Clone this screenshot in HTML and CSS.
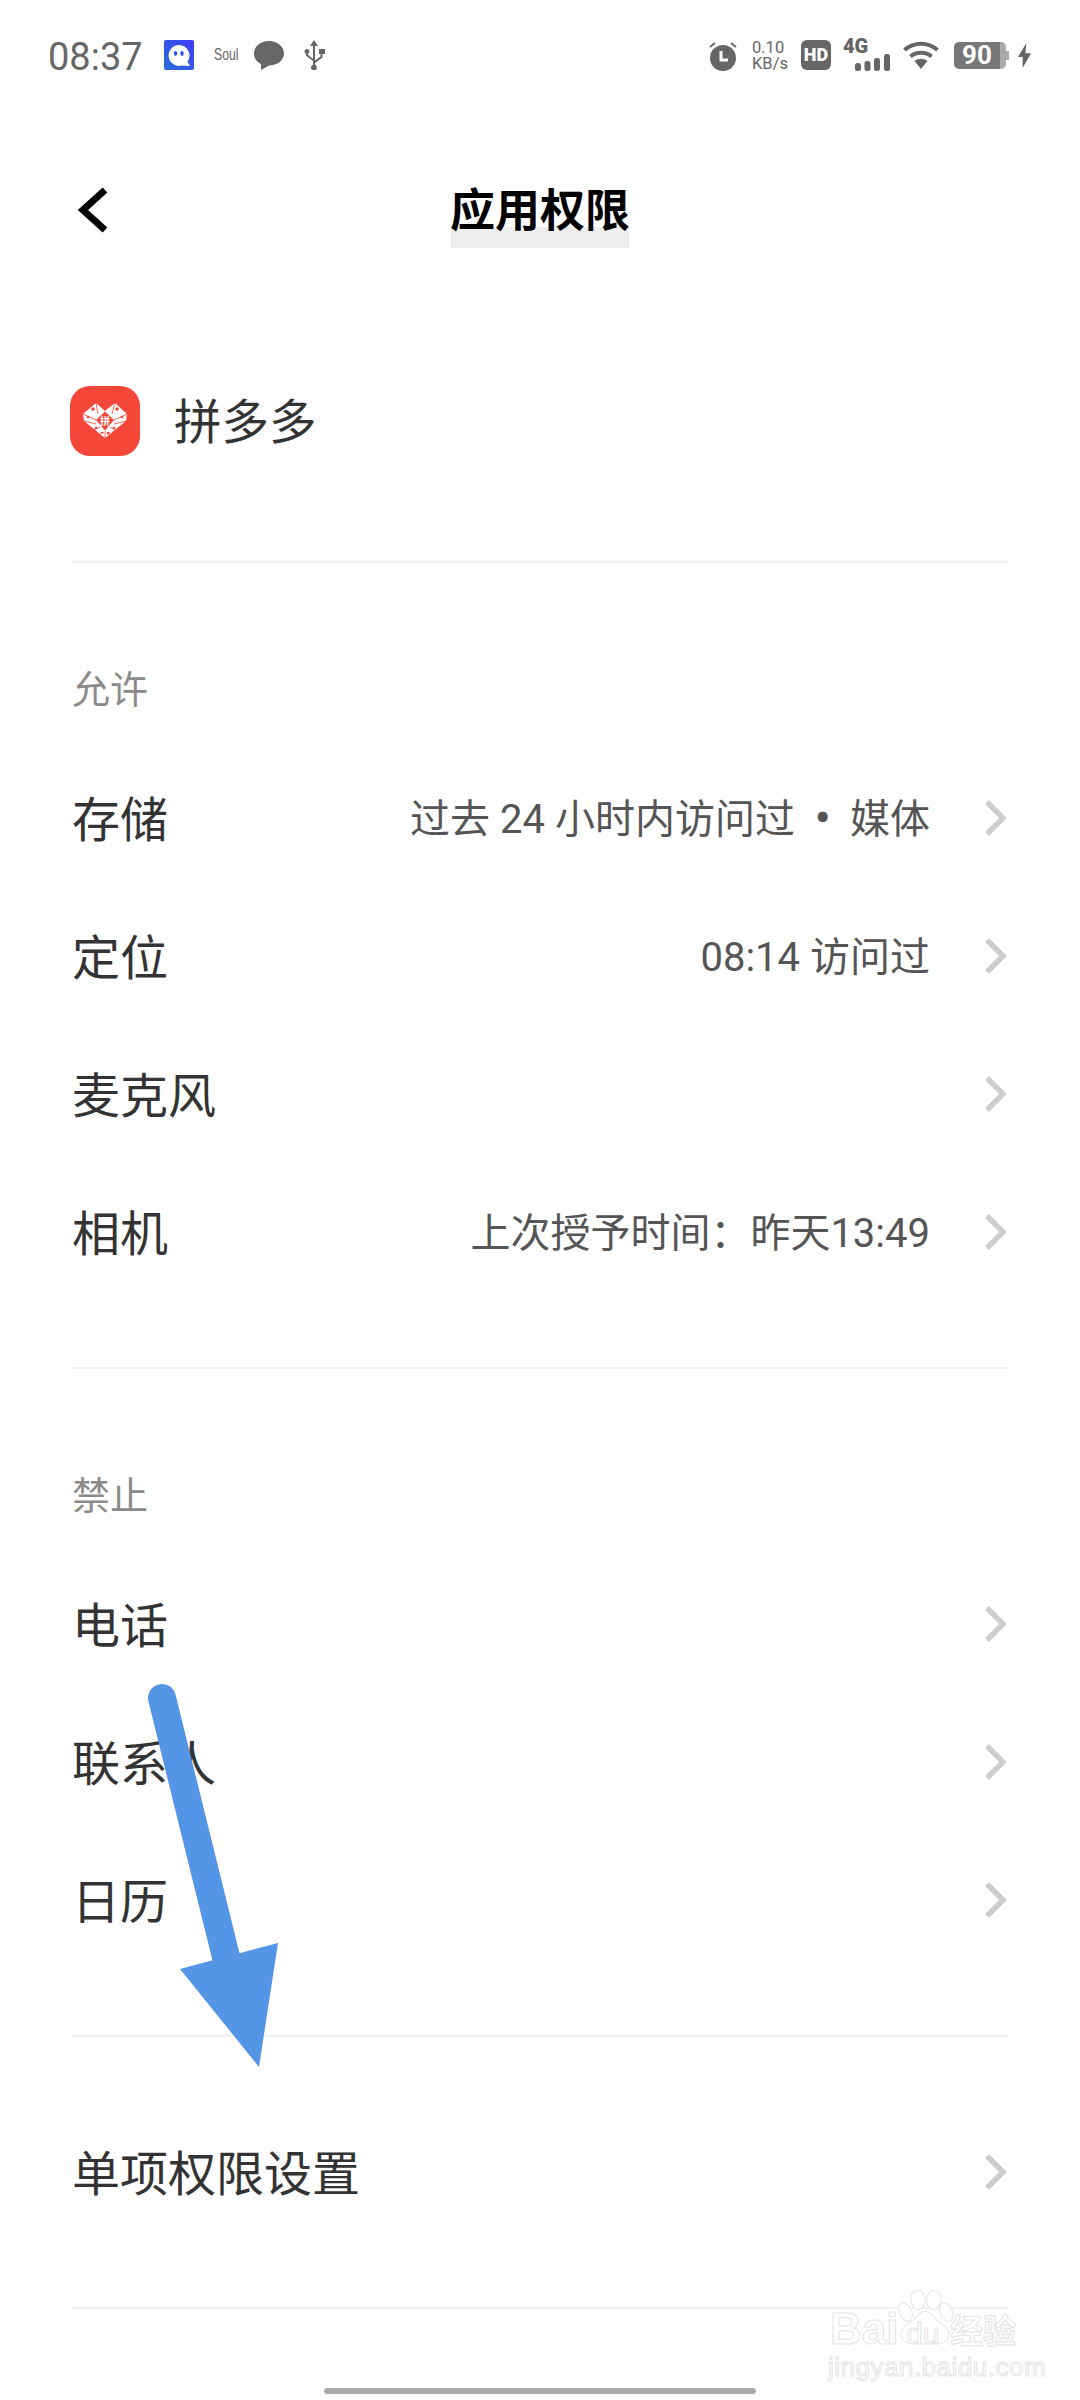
FILE: index.html
```html
<!DOCTYPE html>
<html lang="zh-CN">
<head>
<meta charset="utf-8">
<title>应用权限</title>
<link rel="stylesheet" href="styles.css">
</head>
<body>
<div class="phone">
  <div class="status">
    <div class="status-left">
      <span class="time">08:37</span>
      <svg class="ic-q" viewBox="0 0 30 30"><defs><linearGradient id="qg" x1="0" y1="1" x2="1" y2="0"><stop offset="0" stop-color="#2a6fd8"/><stop offset="1" stop-color="#3f3cf5"/></linearGradient></defs><rect width="30" height="30" rx="2" fill="url(#qg)"/><path d="M15 5a10.500 10.500 0 1 0 3 20.600L26 26l-2.500-4.500A10.500 10.500 0 0 0 15 5z" fill="#fff"/><ellipse cx="11.500" cy="13.500" rx="1.700" ry="2.400" fill="#3553e8"/><ellipse cx="18" cy="13.500" rx="1.700" ry="2.400" fill="#3553e8"/></svg>
      <span class="soul">Soul</span>
      <svg class="ic-msg" viewBox="0 0 30 29"><path d="M15 0C6.700 0 0 5 0 12.500c0 5 3 8.500 7 10.500l0 6 8-4.500c8.300 0 15-5 15-12S23.300 0 15 0z" fill="#666"/></svg>
      <svg class="ic-usb" viewBox="0 0 22 30"><path d="M11 0l4 6h-3v14.500l5.500-4V14H16V9h6v5h-2.500v3.500L12 23v1.700a3 3 0 1 1-2 0V21L3 15.700v-1.900a2.500 2.500 0 1 1 2 0v.9l5 4V6H7z" fill="#666"/></svg>
    </div>
    <div class="status-right">
      <svg class="ic-alarm" viewBox="0 0 28 30"><circle cx="14" cy="17" r="13" fill="#666"/><path d="M1 6l5-4M27 6l-5-4" stroke="#666" stroke-width="2"/><path d="M12 10v9h7" stroke="#fff" stroke-width="3" fill="none"/></svg>
      <div class="speed"><span>0.10</span><span>KB/s</span></div>
      <div class="hd">HD</div>
      <div class="signal">
        <span class="net">4G</span>
        <svg class="ic-bars" viewBox="0 0 35 17"><g fill="#666"><rect x="0" y="9" width="6" height="8" rx="2.500"/><rect x="9.500" y="7" width="6" height="10" rx="2.500"/><rect x="19" y="4" width="6" height="13" rx="2.500"/><rect x="29" y="0" width="6" height="17" rx="2.500"/></g></svg>
      </div>
      <svg class="ic-wifi" viewBox="0 0 36 28"><g fill="none" stroke="#666" stroke-width="4"><path d="M1.500 9c9.500-8.500 23.500-8.500 33 0"/><path d="M7.500 15.500c6-5 15-5 21 0"/></g><path d="M11.500 20c4-3 9-3 13 0L18 28z" fill="#666"/></svg>
      <div class="battery"><span class="batt-num">90</span></div>
      <svg class="ic-bolt" viewBox="0 0 14 27"><path d="M9 0L0 15h5L5 27l9-16H8z" fill="#666"/></svg>
    </div>
  </div>

  <header class="header">
    <svg class="back" viewBox="0 0 32 48"><path d="M28 4L6 24l22 20" fill="none" stroke="#000" stroke-width="7"/></svg>
    <h1 class="title">应用权限</h1>
  </header>

  <div class="app">
    <div class="app-icon">
      <svg class="heart" viewBox="0 0 44 35"><path d="M13 0l9 8 10-8 12 11-1 7-21 17L1 18 0 11z" fill="#fff"/><path d="M13 0l2 11M32 0l-3 11M0 11l13 6M44 11l-13 6M1 18l12 3M43 18l-12 3M11 27l6-3M33 27l-6-3M22 28v7" stroke="#f44336" stroke-width=".8"/><path d="M13 17l9-8.500 9 8.500-9 10.500z" fill="#f44336"/><g fill="#f44336"><circle cx="10" cy="6" r="1.800"/><circle cx="34" cy="6" r="1.800"/><circle cx="5" cy="14" r="1.300"/><circle cx="39" cy="14" r="1.300"/><circle cx="13" cy="25" r="1.300"/><circle cx="31" cy="25" r="1.300"/><rect x="17.500" y="29" width="3" height="1.500"/><rect x="24" y="29" width="2.500" height="2.500"/></g><text class="heart-text" x="22" y="21.500" text-anchor="middle">拼</text></svg>
    </div>
    <span class="app-name">拼多多</span>
  </div>

  <section class="section">
    <div class="label">允许</div>
    <div class="row"><span class="row-name">存储</span><span class="row-val">过去 24 小时内访问过<b class="dot">•</b>媒体</span><svg class="chev" viewBox="0 0 24 38"><path d="M3 3l16 16L3 35" fill="none" stroke="#cdcdcd" stroke-width="5.500"/></svg></div>
    <div class="row"><span class="row-name">定位</span><span class="row-val">08:14 访问过</span><svg class="chev" viewBox="0 0 24 38"><path d="M3 3l16 16L3 35" fill="none" stroke="#cdcdcd" stroke-width="5.500"/></svg></div>
    <div class="row"><span class="row-name">麦克风</span><span class="row-val"></span><svg class="chev" viewBox="0 0 24 38"><path d="M3 3l16 16L3 35" fill="none" stroke="#cdcdcd" stroke-width="5.500"/></svg></div>
    <div class="row"><span class="row-name">相机</span><span class="row-val">上次授予时间&#xFF1A;昨天13:49</span><svg class="chev" viewBox="0 0 24 38"><path d="M3 3l16 16L3 35" fill="none" stroke="#cdcdcd" stroke-width="5.500"/></svg></div>
  </section>

  <section class="section">
    <div class="label">禁止</div>
    <div class="row"><span class="row-name">电话</span><span class="row-val"></span><svg class="chev" viewBox="0 0 24 38"><path d="M3 3l16 16L3 35" fill="none" stroke="#cdcdcd" stroke-width="5.500"/></svg></div>
    <div class="row"><span class="row-name">联系人</span><span class="row-val"></span><svg class="chev" viewBox="0 0 24 38"><path d="M3 3l16 16L3 35" fill="none" stroke="#cdcdcd" stroke-width="5.500"/></svg></div>
    <div class="row"><span class="row-name">日历</span><span class="row-val"></span><svg class="chev" viewBox="0 0 24 38"><path d="M3 3l16 16L3 35" fill="none" stroke="#cdcdcd" stroke-width="5.500"/></svg></div>
  </section>

  <section class="section section-single">
    <div class="row"><span class="row-name">单项权限设置</span><span class="row-val"></span><svg class="chev" viewBox="0 0 24 38"><path d="M3 3l16 16L3 35" fill="none" stroke="#cdcdcd" stroke-width="5.500"/></svg></div>
  </section>
  <div class="rule"></div>

  <svg class="arrow" viewBox="0 0 150 400"><path d="M22 18L88 285" fill="none" stroke="#5595e6" stroke-width="28" stroke-linecap="round"/><path d="M40 289L138 263L119 387z" fill="#5595e6"/></svg>

  <div class="watermark">
    <svg class="wm-paw" viewBox="0 0 60 70"><g fill="#fff" stroke="#e6e6e6" stroke-width="1.200"><ellipse cx="8" cy="25" rx="7" ry="11" transform="rotate(-25 8 25)"/><ellipse cx="22" cy="11" rx="8" ry="11" transform="rotate(-5 22 11)"/><ellipse cx="40" cy="11" rx="8" ry="11" transform="rotate(8 40 11)"/><ellipse cx="54" cy="25" rx="7" ry="11" transform="rotate(-25 54 25)"/><path d="M30 24c-8 0-10 9-17 13-9 5-12 12-9 18 3 5 9 6 26 6s23-1 26-6c3-6 0-13-9-18-7-4-9-13-17-13z"/></g></svg>
    <span class="wm-bai">Bai</span>
    <span class="wm-du">du</span>
    <span class="wm-cn">经验</span>
    <span class="wm-url">jingyan.baidu.com</span>
  </div>

  <div class="home-bar"></div>
</div>
</body>
</html>
```
FILE: styles.css
```css
* { box-sizing: border-box; }
html, body { margin: 0; padding: 0; background: #fff; }
.phone {
  position: relative;
  isolation: isolate;
  width: 1080px;
  height: 2400px;
  overflow: hidden;
  background: #fff;
  font-family: "Noto Sans CJK SC", "Noto Sans", sans-serif;
  color: #333;
}
.status {
  height: 108px;
  display: flex;
  justify-content: space-between;
  align-items: flex-start;
  padding: 38px 49px 0 48px;
  color: #666;
}
.status-left, .status-right { display: flex; align-items: center; height: 34px; }
.time { font: 400 38px/34px Roboto, sans-serif; color: #666; width: 116px; margin-top: 4px; }
.ic-q { width: 30px; height: 30px; margin-right: 20px; }
.soul { font: 400 17px/34px "Liberation Sans", sans-serif; transform: scaleX(.72); transform-origin: left center; width: 21px; margin-right: 19px; color: #666; }
.ic-msg { width: 30px; height: 29px; margin-right: 19px; }
.ic-usb { width: 22px; height: 30px; }
.ic-alarm { width: 28px; height: 30px; margin-right: 15px; margin-top: 1px; }
.speed { display: flex; flex-direction: column; align-items: flex-start; font: 400 16.500px/16px Roboto, sans-serif; color: #666; width: 36px; margin-right: 13px; margin-top: 1px; }
.hd {
  width: 30px; height: 30px;
  border-radius: 6px;
  background: #666;
  color: #fff;
  text-align: center;
  font: 900 18px/30px Roboto, sans-serif;
  margin-right: 12px;
}
.signal { position: relative; width: 47px; height: 34px; margin-right: 13px; }
.net { position: absolute; left: 0; top: -2px; font: 900 20px/20px Roboto, sans-serif; color: #666; }
.ic-bars { position: absolute; right: 0; bottom: 1px; width: 35px; height: 17px; }
.ic-wifi { width: 36px; height: 28px; margin-right: 15px; }
.battery {
  position: relative;
  width: 52px;
  height: 27px;
  border-radius: 5px;
  background: linear-gradient(90deg, #777 0 88%, #aaa 88%);
  margin-right: 12px;
  text-align: center;
}
.battery::after { content: ""; position: absolute; right: -3px; top: 9px; width: 3px; height: 9px; background: #aaa; }
.batt-num { color: #fff; font: 700 26px/27px Roboto, sans-serif; margin-left: -6px; }
.ic-bolt { width: 13px; height: 27px; }

.header {
  position: relative;
  height: 208px;
  display: flex;
  align-items: center;
  justify-content: center;
}
.back { position: absolute; left: 77px; top: 78px; width: 32px; height: 48px; }
.title {
  position: relative;
  margin: -8px 0 0 0;
  font-size: 45px;
  line-height: 60px;
  font-weight: 700;
  color: #000;
}
.title::before {
  content: "";
  position: absolute;
  left: 1px; right: 1px;
  top: 49px;
  height: 21px;
  background: #eee;
  z-index: -1;
}
.app {
  height: 245px;
  display: flex;
  align-items: center;
  padding: 0 0 35px 70px;
}
.app-icon {
  width: 70px; height: 70px;
  border-radius: 20px;
  background: #f4473a;
  display: flex; align-items: center; justify-content: center;
  margin-right: 34px;
}
.heart { width: 44px; height: 35px; margin-top: -2px; }
.heart-text { font: 700 10px "Noto Sans CJK SC", sans-serif; fill: #fff; }
.app-name { font-size: 47.500px; line-height: 60px; color: #333; margin-top: -4px; }

.section { margin: 0 72px; border-top: 2px solid #f2f2f2; padding-bottom: 66px; }
.section-single { padding-top: 66px; }
.label { height: 186px; padding-top: 104px; font-size: 38px; line-height: 40px; color: #8a8a8a; }
.row { height: 138px; display: flex; align-items: center; }
.row-name { font-size: 48px; color: #333; white-space: nowrap; margin-top: -5px; }
.row-val { flex: 1; text-align: right; font-family: Roboto, "Noto Sans CJK SC", sans-serif; font-size: 40px; color: #555; white-space: nowrap; padding-right: 54px; margin-top: -4px; }
.dot { font-weight: 700; margin: 0 20px; font-size: 42px; }
.chev { width: 24px; height: 38px; flex: none; }
.rule { margin: 0 72px; height: 2px; background: #f2f2f2; }

.arrow { position: absolute; left: 140px; top: 1680px; width: 150px; height: 400px; }
.watermark { position: absolute; left: 828px; top: 2290px; width: 200px; height: 90px; color: #fff; -webkit-text-stroke: 1px #e4e4e4; }
.wm-paw { position: absolute; left: 67px; top: 0; width: 60px; height: 62px; }
.wm-bai { position: absolute; left: 2px; top: 14px; font: 700 44px/50px "Liberation Sans", sans-serif; }
.wm-du { position: absolute; left: 78px; top: 24px; font: 400 30px/40px "Liberation Sans", sans-serif; }
.wm-cn { position: absolute; left: 122px; top: 16px; font: 700 33px/46px "Noto Sans CJK SC", sans-serif; white-space: nowrap; }
.wm-url { position: absolute; left: 0; top: 62px; font: 400 26px/30px "Liberation Sans", sans-serif; letter-spacing: .5px; white-space: nowrap; }
.home-bar { position: absolute; left: 324px; top: 2388px; width: 432px; height: 6px; border-radius: 3px; background: #aaa; }
```
